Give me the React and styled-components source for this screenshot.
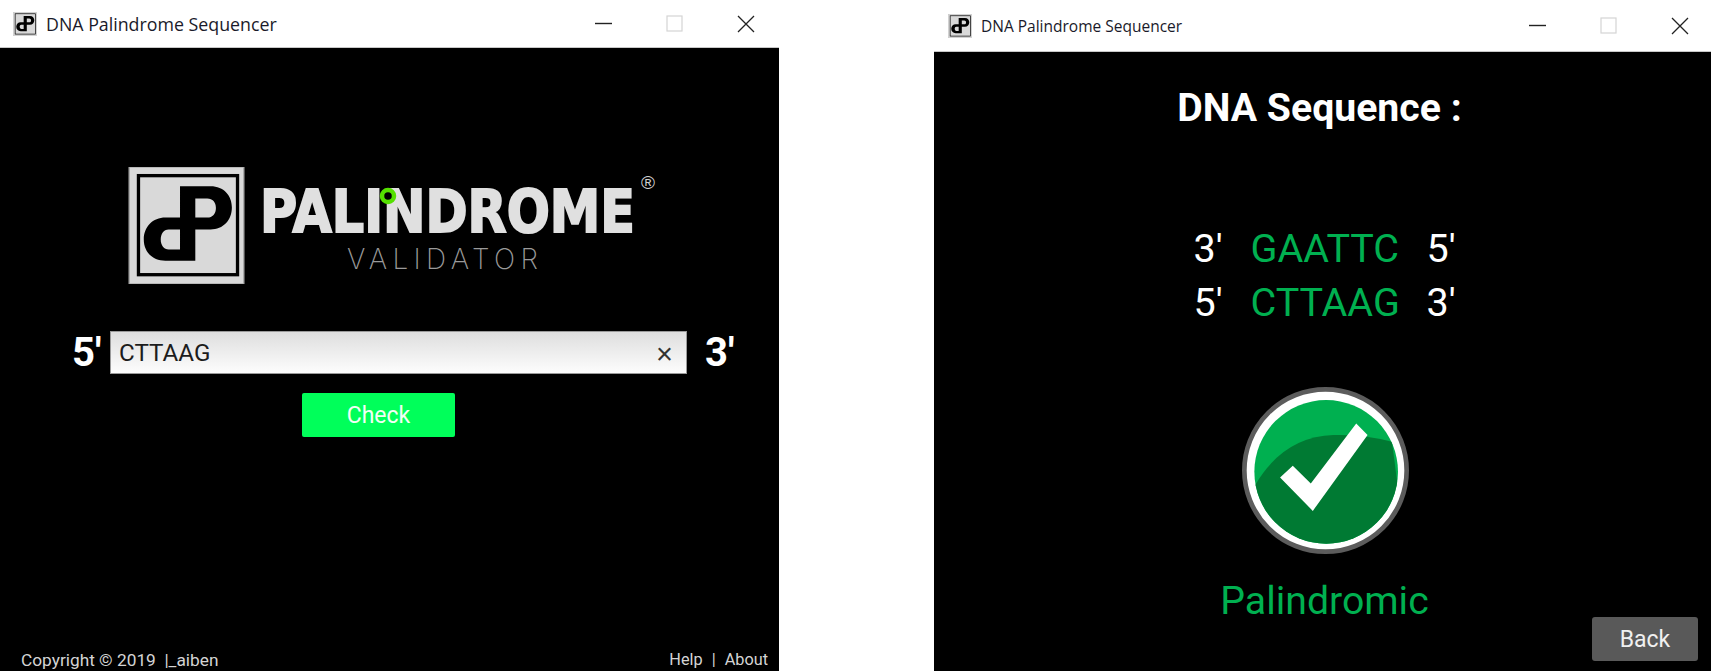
import React from "react"
import styled, { createGlobalStyle } from "styled-components"

const GlobalStyle = createGlobalStyle`
  html, body {
    margin: 0;
    height: 671px;
    overflow: hidden;
    background: #fff;
  }
`

const Page = styled.div`
  display: flex;
  justify-content: space-between;
  height: 671px;
  font-family: Roboto, "Liberation Sans", sans-serif;
`

const Window = styled.div`
  width: ${(p) => p.$width}px;
  display: flex;
  flex-direction: column;
`

const TitleBar = styled.div`
  height: ${(p) => p.$height}px;
  flex: none;
  display: flex;
  align-items: center;
  padding-left: ${(p) => p.$inset}px;
  background: #fff;
  border-bottom: 1px solid #c8c8c8;
  font-family: "Open Sans", "Noto Sans", sans-serif;
  font-size: ${(p) => p.$fontSize}px;
  color: #1a1a2a;
`

const TitleText = styled.span`
  margin-left: 9px;
  white-space: nowrap;
`

const WindowControls = styled.div`
  margin-left: auto;
  display: flex;
  align-items: center;
  padding-right: ${(p) => p.$right}px;
  gap: 54px;
`

const Body = styled.div`
  flex: 1;
  min-height: 0;
  background: #000;
  color: #fff;
  display: flex;
  flex-direction: column;
`

const LogoRow = styled.div`
  display: flex;
  gap: 16px;
  padding: 119px 0 0 128px;
`

const InputRow = styled.div`
  display: flex;
  align-items: center;
  margin-top: 45px;
  padding-left: 72px;
`

const EndLabel = styled.div`
  font-size: 40px;
  font-weight: 700;
  line-height: 43px;
  width: ${(p) => p.$width}px;
  flex: none;
`

const InputField = styled.div`
  width: 577px;
  height: 43px;
  box-sizing: border-box;
  margin-right: 18px;
  display: flex;
  align-items: center;
  justify-content: space-between;
  padding: 0 13px 0 8px;
  background: linear-gradient(#dedede, #fdfdfd);
  border: 1px solid #9a9a9a;
  color: #1c1c1c;
  font-size: 24.2px;
`

const ClearMark = styled.span`
  font-family: "Liberation Sans", sans-serif;
  font-size: 29px;
  line-height: 1;
  color: #333;
  padding-top: 3px;
`

const CheckButton = styled.button`
  align-self: flex-start;
  margin: 19px 0 0 302px;
  width: 153px;
  height: 44px;
  border: 0;
  border-radius: 2px;
  background: #00ff5a;
  color: #f2fff5;
  font-family: inherit;
  font-size: 23px;
`

const Footer = styled.div`
  margin-top: auto;
  display: flex;
  justify-content: space-between;
  padding: 0 11px 1px 21px;
  line-height: 20px;
  color: #d4d4d4;
`

const Copyright = styled.span`
  font-size: 17.3px;
`

const FooterLinks = styled.div`
  display: flex;
  gap: 9px;
  font-size: 16.3px;
`

const Heading = styled.h1`
  margin: 35px 6px 0 0;
  text-align: center;
  font-size: 39.2px;
  line-height: 42px;
  font-weight: 700;
`

const Strands = styled.div`
  margin-top: 93px;
  display: grid;
  grid-template-columns: 57px 176px 26px;
  grid-auto-rows: 54px;
  justify-content: center;
  padding-left: 1px;
  font-size: 39.5px;
  line-height: 54px;
`

const SeqText = styled.span`
  color: #00b050;
`

const Badge = styled.div`
  align-self: center;
  margin: 55px 0 0 5px;
  line-height: 0;
`

const Verdict = styled.div`
  margin-top: 22px;
  padding-left: 4px;
  text-align: center;
  color: #00b050;
  font-size: 39.2px;
  line-height: 46px;
`

const BackButton = styled.button`
  align-self: flex-end;
  margin: -7px 13px 0 0;
  width: 106px;
  height: 44px;
  border: 0;
  border-radius: 3px;
  background: #595959;
  color: #f0f0f0;
  font-family: inherit;
  font-size: 23px;
`

// dP monogram, also used small as the window icon
const LogoMark = ({ size }) => (
  <svg width={size} height={size} viewBox="23 20 345 352" style={{ flex: "none" }}>
    <rect x="23" y="20" width="345" height="352" fill="#d9d9d9" stroke="#a8a8a8" strokeWidth="4" />
    <rect x="51" y="46" width="298" height="298" fill="none" stroke="#000" strokeWidth="10" />
    <path
      fillRule="evenodd"
      d="M176 78 H268 C308 78 332 106 332 142 C332 180 306 208 268 208 H222 V302 H132 C92 302 67 274 67 238 C67 200 94 172 132 172 H176 Z
         M222 115 V172 H258 C274 172 284 160 284 143 C284 126 274 115 258 115 Z
         M176 208 H142 C126 208 118 222 118 238 C118 256 128 268 142 268 H176 Z"
      fill="#000"
    />
  </svg>
)

const Wordmark = () => (
  <svg width="400" height="119" viewBox="0 0 400 119" style={{ flex: "none" }}>
    <text
      x="-1"
      y="65"
      textLength="375"
      lengthAdjust="spacingAndGlyphs"
      fontFamily="DejaVu Sans"
      fontWeight="700"
      fontSize="58"
      fill="#e0e0e0"
      stroke="#e0e0e0"
      strokeWidth="2"
    >
      PALINDROME
    </text>
    <circle cx="127" cy="29" r="6" fill="#000" stroke="#55e000" strokeWidth="4.5" />
    <text
      x="86"
      y="102"
      textLength="191"
      fontFamily="Inter"
      fontWeight="200"
      fontSize="28"
      fill="#9a9a9a"
    >
      VALIDATOR
    </text>
    <text x="380" y="22" fontFamily="Liberation Sans" fontSize="19" fill="#cfcfcf">
      ®
    </text>
  </svg>
)

const MinimizeIcon = () => (
  <svg width="17" height="17" viewBox="0 0 17 17">
    <path d="M0 8.5 H17" stroke="#222" strokeWidth="1.4" />
  </svg>
)

const MaximizeIcon = () => (
  <svg width="17" height="17" viewBox="0 0 17 17">
    <rect x="1" y="1" width="15" height="15" fill="none" stroke="#d4d4d4" strokeWidth="1.2" />
  </svg>
)

const CloseIcon = () => (
  <svg width="18" height="18" viewBox="0 0 18 18">
    <path d="M1 1 L17 17 M17 1 L1 17" stroke="#222" strokeWidth="1.3" />
  </svg>
)

const CheckBadge = () => (
  <svg width="171" height="171" viewBox="60 45 512 512">
    <defs>
      <clipPath id="faceClip">
        <circle cx="318" cy="305" r="215" />
      </clipPath>
    </defs>
    <circle cx="316" cy="301" r="243" fill="#fff" stroke="#5c5c5c" strokeWidth="14" />
    <circle cx="318" cy="305" r="215" fill="#00b050" />
    <path
      clipPath="url(#faceClip)"
      d="M105 345 Q190 200 340 195 Q430 192 515 215 L560 560 L60 560 Z"
      fill="#007a33"
    />
    <polygon points="180,322 218,287 272,340 408,160 442,195 278,422" fill="#fff" />
  </svg>
)

const WindowTitle = ({ height, inset, right, fontSize }) => (
  <TitleBar $height={height} $inset={inset} $fontSize={fontSize}>
    <LogoMark size={24} />
    <TitleText>DNA Palindrome Sequencer</TitleText>
    <WindowControls $right={right}>
      <MinimizeIcon />
      <MaximizeIcon />
      <CloseIcon />
    </WindowControls>
  </TitleBar>
)

const App = () => {
  return (
    <>
      <GlobalStyle />
      <Page>
        <Window $width={779}>
          <WindowTitle height={47} inset={13} right={24} fontSize={17.8} />
          <Body>
            <LogoRow>
              <LogoMark size={117} />
              <Wordmark />
            </LogoRow>
            <InputRow>
              <EndLabel $width={38}>5'</EndLabel>
              <InputField>
                <span>CTTAAG</span>
                <ClearMark>×</ClearMark>
              </InputField>
              <EndLabel $width={30}>3'</EndLabel>
            </InputRow>
            <CheckButton>Check</CheckButton>
            <Footer>
              <Copyright>Copyright © 2019 &nbsp;|_aiben</Copyright>
              <FooterLinks>
                <span>Help</span>
                <span>|</span>
                <span>About</span>
              </FooterLinks>
            </Footer>
          </Body>
        </Window>
        <Window $width={777}>
          <WindowTitle height={51} inset={14} right={22} fontSize={15.5} />
          <Body>
            <Heading>DNA Sequence :</Heading>
            <Strands>
              <span>3'</span>
              <SeqText>GAATTC</SeqText>
              <span>5'</span>
              <span>5'</span>
              <SeqText>CTTAAG</SeqText>
              <span>3'</span>
            </Strands>
            <Badge>
              <CheckBadge />
            </Badge>
            <Verdict>Palindromic</Verdict>
            <BackButton>Back</BackButton>
          </Body>
        </Window>
      </Page>
    </>
  )
}

export default App
